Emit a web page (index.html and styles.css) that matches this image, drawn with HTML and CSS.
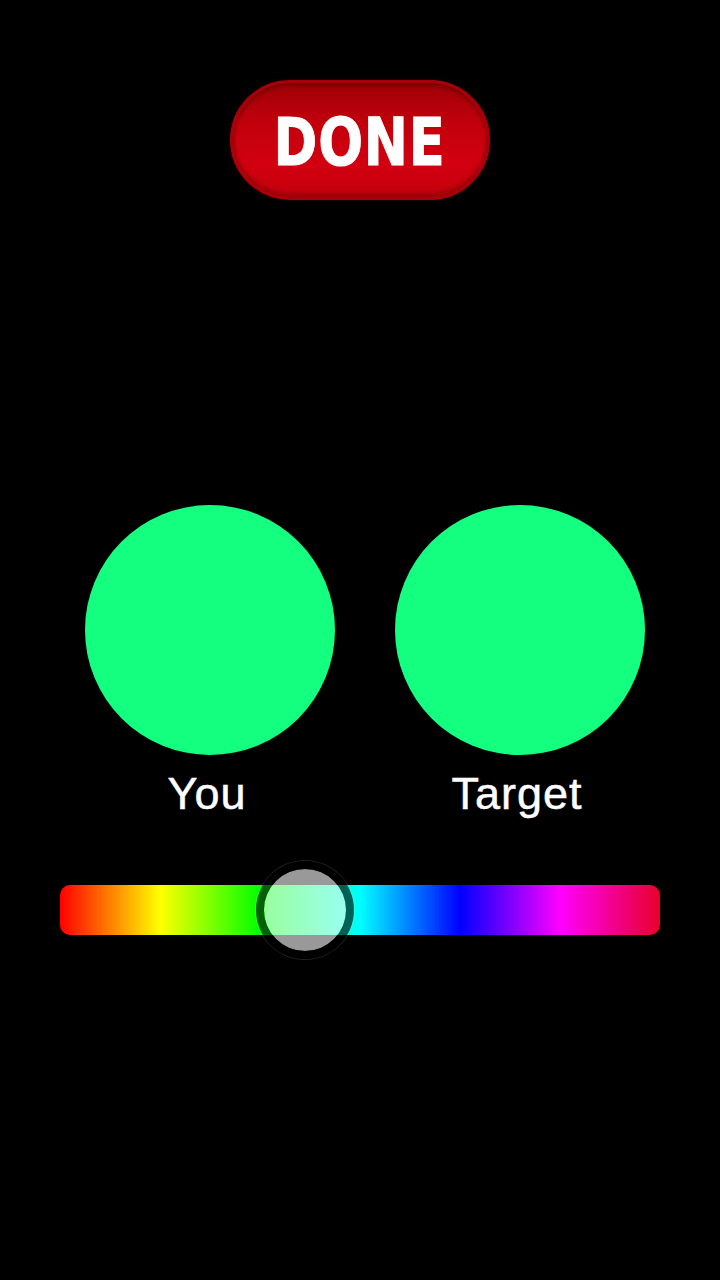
FILE: index.html
```html
<!DOCTYPE html>
<html>
<head>
<meta charset="utf-8">
<link rel="stylesheet" href="styles.css">
</head>
<body>
<div class="screen">
  <div class="top">
    <button class="done"><span class="done-text">DONE</span></button>
  </div>
  <div class="swatches">
    <div class="swatch">
      <div class="circle"></div>
      <div class="label">You</div>
    </div>
    <div class="swatch">
      <div class="circle"></div>
      <div class="label">Target</div>
    </div>
  </div>
  <div class="slider">
    <div class="track"></div>
    <div class="thumb" style="left: 245px;"></div>
  </div>
</div>
</body>
</html>
```
FILE: styles.css
```css
html, body {
  margin: 0;
  padding: 0;
  background: #000;
}
.screen {
  width: 720px;
  height: 1280px;
  display: flex;
  flex-direction: column;
  font-family: "Liberation Sans", Arial, sans-serif;
}
.top {
  display: flex;
  justify-content: center;
  padding-top: 80px;
}
.done {
  width: 260px;
  height: 120px;
  border-radius: 60px;
  border: 3px solid #a8000a;
  box-sizing: border-box;
  background: linear-gradient(180deg, #9e0006 0%, #c2000c 35%, #d20010 70%, #c4000c 100%);
  box-shadow: inset 0 3px 4px rgba(0,0,0,0.25), inset 0 -4px 4px rgba(80,0,0,0.35), 0 0 4px rgba(60,0,0,0.6);
  padding: 0;
  display: flex;
  align-items: center;
  justify-content: center;
  cursor: pointer;
}
.done-text {
  display: inline-block;
  color: #fff;
  font-family: "DejaVu Sans", sans-serif;
  font-weight: bold;
  font-size: 66px;
  line-height: 1;
  letter-spacing: 1px;
  transform: translateY(3px) scaleX(0.8);
  -webkit-text-stroke: 1px #fff;
}
.swatches {
  display: flex;
  gap: 60px;
  padding-left: 85px;
  margin-top: 305px;
}
.swatch {
  width: 250px;
  display: flex;
  flex-direction: column;
  align-items: center;
}
.circle {
  width: 250px;
  height: 250px;
  border-radius: 50%;
  background: #14ff80;
}
.label {
  margin-top: 13px;
  padding-right: 6px;
  color: #fff;
  font-size: 45px;
  line-height: 52px;
  letter-spacing: 1px;
  -webkit-text-stroke: 0.5px #fff;
}
.slider {
  position: relative;
  margin: 65px 60px 0 60px;
  height: 50px;
}
.track {
  height: 50px;
  border-radius: 10px;
  background: linear-gradient(90deg,
    #ff0000 0%,
    #ffff00 16.67%,
    #00ff00 33.33%,
    #00ffff 50%,
    #0000ff 66.67%,
    #ff00ff 83.33%,
    #e8002a 100%);
}
.thumb {
  position: absolute;
  top: 50%;
  width: 82px;
  height: 82px;
  margin-left: -49px;
  margin-top: -49px;
  border-radius: 50%;
  background: rgba(255,255,255,0.6);
  background-clip: padding-box;
  border: 8px solid rgba(0,0,0,0.62);
  box-sizing: content-box;
  box-shadow: 0 0 0 1px rgba(255,255,255,0.12);
}
```
